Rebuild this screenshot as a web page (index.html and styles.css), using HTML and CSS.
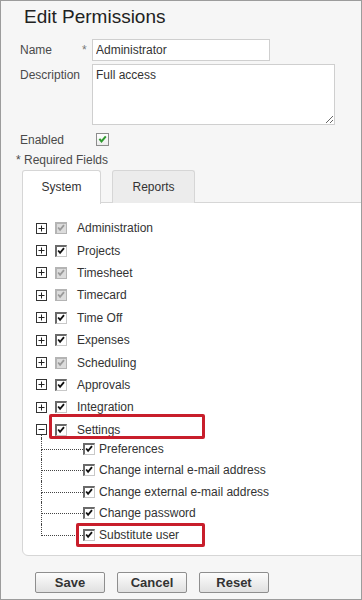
FILE: index.html
```html
<!DOCTYPE html>
<html lang="en">
<head>
  <meta charset="UTF-8">
  <meta name="viewport" content="width=device-width, initial-scale=1.0">
  <title>Edit Permissions</title>
  <link rel="stylesheet" href="styles.css">
</head>
<body>
  <svg class="defs" width="0" height="0" aria-hidden="true">
    <symbol id="check" viewBox="0 0 12 12">
      <path d="M2.6 5.4 L4.9 8.1 L9.6 2.6" fill="none" stroke="currentColor" stroke-width="2.2"/>
    </symbol>
    <symbol id="plus" viewBox="0 0 11 11">
      <rect x="0.5" y="0.5" width="10" height="10" fill="#fff" stroke="#333"/>
      <path d="M2.5 5.5 H8.5 M5.5 2.5 V8.5" stroke="#222"/>
    </symbol>
    <symbol id="minus" viewBox="0 0 11 11">
      <rect x="0.5" y="0.5" width="10" height="10" fill="#fff" stroke="#333"/>
      <path d="M2.5 5.5 H8.5" stroke="#222"/>
    </symbol>
  </svg>

  <div class="page">
    <h1 class="title">Edit Permissions</h1>

    <div class="fields">
      <label class="field-label" for="name">Name</label>
      <span class="req">*</span>
      <input id="name" class="text-input" type="text" value="Administrator">

      <label class="field-label" for="description">Description</label>
      <span class="req"></span>
      <textarea id="description" class="text-area">Full access</textarea>

      <span class="field-label">Enabled</span>
      <span class="req"></span>
      <span class="enabled-box"><svg><use href="#check"/></svg></span>
    </div>

    <p class="required">* Required Fields</p>

    <div class="tabs">
      <div class="tab active">System</div>
      <div class="tab">Reports</div>
    </div>

    <div class="panel">
      <ul class="tree">
        <li class="node"><svg class="toggle"><use href="#plus"/></svg><span class="cb disabled"><svg><use href="#check"/></svg></span><span>Administration</span></li>
        <li class="node"><svg class="toggle"><use href="#plus"/></svg><span class="cb"><svg><use href="#check"/></svg></span><span>Projects</span></li>
        <li class="node"><svg class="toggle"><use href="#plus"/></svg><span class="cb disabled"><svg><use href="#check"/></svg></span><span>Timesheet</span></li>
        <li class="node"><svg class="toggle"><use href="#plus"/></svg><span class="cb disabled"><svg><use href="#check"/></svg></span><span>Timecard</span></li>
        <li class="node"><svg class="toggle"><use href="#plus"/></svg><span class="cb"><svg><use href="#check"/></svg></span><span>Time Off</span></li>
        <li class="node"><svg class="toggle"><use href="#plus"/></svg><span class="cb"><svg><use href="#check"/></svg></span><span>Expenses</span></li>
        <li class="node"><svg class="toggle"><use href="#plus"/></svg><span class="cb disabled"><svg><use href="#check"/></svg></span><span>Scheduling</span></li>
        <li class="node"><svg class="toggle"><use href="#plus"/></svg><span class="cb"><svg><use href="#check"/></svg></span><span>Approvals</span></li>
        <li class="node"><svg class="toggle"><use href="#plus"/></svg><span class="cb"><svg><use href="#check"/></svg></span><span>Integration</span></li>
        <li class="node node-open">
          <div class="node-row marked marked-settings"><svg class="toggle"><use href="#minus"/></svg><span class="cb"><svg><use href="#check"/></svg></span><span>Settings</span></div>
          <ul class="children">
            <li class="child"><span class="cb"><svg><use href="#check"/></svg></span><span>Preferences</span></li>
            <li class="child"><span class="cb"><svg><use href="#check"/></svg></span><span>Change internal e-mail address</span></li>
            <li class="child"><span class="cb"><svg><use href="#check"/></svg></span><span>Change external e-mail address</span></li>
            <li class="child"><span class="cb"><svg><use href="#check"/></svg></span><span>Change password</span></li>
            <li class="child marked marked-sub"><span class="cb"><svg><use href="#check"/></svg></span><span>Substitute user</span></li>
          </ul>
        </li>
      </ul>
    </div>

    <div class="actions">
      <button class="button">Save</button>
      <button class="button">Cancel</button>
      <button class="button">Reset</button>
    </div>
  </div>
</body>
</html>
```

FILE: styles.css
```css
body {
  margin: 0;
  font-family: "Liberation Sans", Arial, sans-serif;
  font-size: 12px;
  color: #333;
  background-color: #fff;
}
.defs {
  position: absolute;
}
.page {
  box-sizing: border-box;
  width: 362px;
  height: 600px;
  border: 1px solid #9c9c9c;
  background-color: #f6f6f6;
  padding: 5px 0 0 15px;
  overflow: hidden;
}
.title {
  margin: 0 0 0 8px;
  font-size: 19px;
  font-weight: normal;
  line-height: 22px;
  color: #222;
}
.fields {
  display: grid;
  grid-template-columns: 61px 11px auto;
  grid-template-rows: 22px 61px 23px;
  row-gap: 3px;
  align-items: center;
  margin: 11px 0 0 4px;
}
.field-label {
  color: #4a4a4a;
}
.fields .field-label:nth-of-type(2) {
  align-self: start;
  padding-top: 4px;
}
.req {
  color: #777;
  padding-left: 1px;
}
.text-input {
  box-sizing: border-box;
  width: 178px;
  height: 22px;
  margin: 0;
  padding: 0 3px;
  border: 1px solid #cfcfcf;
  background: #fff;
  font: 12px "Liberation Sans", Arial, sans-serif;
  color: #333;
}
.text-area {
  box-sizing: border-box;
  width: 243px;
  height: 61px;
  margin: 0;
  padding: 3px;
  border: 1px solid #cfcfcf;
  background: #fff;
  font: 12px "Liberation Sans", Arial, sans-serif;
  color: #333;
}
.enabled-box {
  box-sizing: border-box;
  width: 13px;
  height: 13px;
  margin-left: 4px;
  border: 1px solid #8c8c8c;
  background: linear-gradient(#fff, #ececec);
  color: #2f9a2f;
}
.enabled-box svg {
  display: block;
  width: 11px;
  height: 11px;
}
.required {
  margin: 2px 0 3px;
  line-height: 14px;
  color: #4a4a4a;
}
.tabs {
  display: flex;
  gap: 11px;
  margin-left: 6px;
  position: relative;
  z-index: 1;
}
.tab {
  box-sizing: border-box;
  height: 33px;
  width: 83px;
  border: 1px solid #d6d6d6;
  border-bottom: none;
  border-radius: 3px 3px 0 0;
  background-color: #ececec;
  text-align: center;
  line-height: 32px;
  color: #333;
}
.tab.active {
  width: 79px;
  height: 34px;
  background-color: #fff;
  margin-bottom: -1px;
}
.panel {
  margin: -1px -10px 0 6px;
  border: 1px solid #d6d6d6;
  border-radius: 0 0 0 6px;
  background-color: #fff;
  padding: 14px 0 10px;
}
.tree,
.children {
  list-style: none;
  margin: 0;
  padding: 0;
}
.node,
.node-row {
  display: flex;
  align-items: center;
  height: 22.4px;
  padding-left: 13px;
  position: relative;
}
.node-open {
  display: block;
  height: auto;
  padding-left: 0;
}
.toggle {
  width: 11px;
  height: 11px;
  flex: none;
}
.cb {
  box-sizing: border-box;
  width: 12px;
  height: 12px;
  flex: none;
  margin: 0 10px 0 8px;
  border-top: 2px solid #6a6a6a;
  border-left: 2px solid #6a6a6a;
  border-right: 1px solid #c8c8c8;
  border-bottom: 1px solid #c8c8c8;
  background: #fff;
  color: #111;
}
.cb svg {
  display: block;
  width: 10px;
  height: 10px;
  margin: -1px 0 0 -1px;
}
.cb.disabled {
  border-color: #b4b4b4;
  background: #dcdcdc;
  color: #9a9a9a;
}
.children {
  margin-top: -3px;
  position: relative;
}
.children::before {
  content: "";
  position: absolute;
  left: 18px;
  top: -3px;
  height: 3px;
  border-left: 1px dotted #444;
}
.child {
  display: flex;
  align-items: center;
  height: 21.5px;
  padding-left: 60px;
  position: relative;
}
.child::before {
  content: "";
  position: absolute;
  left: 18px;
  top: 0;
  width: 41px;
  height: 50%;
  border-left: 1px dotted #444;
  border-bottom: 1px dotted #444;
}
.child::after {
  content: "";
  position: absolute;
  left: 18px;
  top: 50%;
  bottom: 0;
  border-left: 1px dotted #444;
}
.child:last-child::after {
  display: none;
}
.child .cb {
  margin: 0 4px 0 0;
}
.marked::after {
  content: "";
  position: absolute;
  border: 3px solid #c81e2b;
  border-radius: 2px;
}
.marked-settings::after {
  left: 26px;
  top: -5px;
  width: 150px;
  height: 19px;
}
.child.marked-sub::after {
  display: block;
  left: 53px;
  top: -1px;
  bottom: auto;
  width: 123px;
  height: 18px;
  border: 3px solid #c81e2b;
  border-left: 3px solid #c81e2b;
}
.actions {
  display: flex;
  gap: 12px;
  margin: 16px 0 0 19px;
}
.button {
  box-sizing: border-box;
  width: 70px;
  height: 21px;
  padding: 0;
  border: 1px solid #8e8e8e;
  border-radius: 2px;
  background: linear-gradient(#fdfdfd, #e0e0e0);
  font: bold 13px "Liberation Sans", Arial, sans-serif;
  color: #333;
  cursor: pointer;
}
```
